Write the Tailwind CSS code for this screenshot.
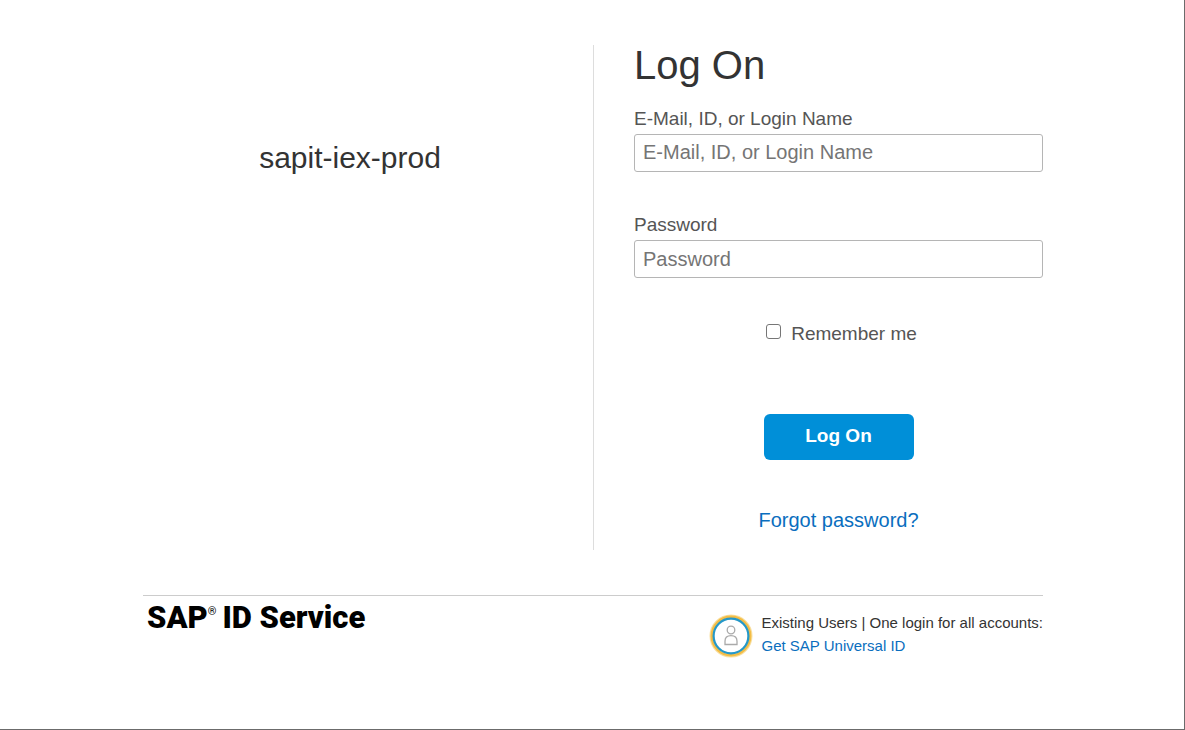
<!DOCTYPE html>
<html lang="en">
<head>
<meta charset="utf-8">
<meta name="viewport" content="width=device-width, initial-scale=1">
<title>Log On</title>
<script src="https://cdn.jsdelivr.net/npm/@tailwindcss/browser@4"></script>
</head>
<body class="relative min-h-screen border-r border-b border-[#6b6b6b] bg-white pl-0.5 font-['Liberation_Sans',Arial,sans-serif] text-[#333]">
  <svg class="absolute top-[126px] -right-px h-[58px] w-px" viewBox="0 0 1 58" fill="#1c1c1c" aria-hidden="true">
    <path d="M0 1h1v1H0zM0 4h1v1H0zM0 9h1v1H0zM0 47h1v1H0zM0 51h1v1H0zM0 55h1v1H0z"/>
  </svg>
  <div class="mx-auto max-w-[900px] pt-[45px]">
    <main class="grid grid-cols-2">
      <section class="flex justify-center pt-[95px] pr-9">
        <h2 class="text-[30px] leading-9">sapit-iex-prod</h2>
      </section>
      <form class="flex flex-col border-l border-[#ddd] pb-3.5 pl-10">
        <h1 class="text-[40px] leading-10">Log On</h1>
        <label for="user" class="mt-6 text-[19px] leading-5 text-[#555]">E-Mail, ID, or Login Name</label>
        <input id="user" type="text" placeholder="E-Mail, ID, or Login Name" class="mt-[5px] h-[38px] w-full rounded-[3px] border border-[#b5b5b5] px-2 pb-0.5 text-xl placeholder:text-[#757575]">
        <label for="pass" class="mt-[43px] text-[19px] leading-5 text-[#555]">Password</label>
        <input id="pass" type="password" placeholder="Password" class="mt-[5px] h-[38px] w-full rounded-[3px] border border-[#b5b5b5] px-2 text-xl placeholder:text-[#757575]">
        <div class="mt-11 flex items-start justify-center gap-2.5 pl-1.5">
          <input id="remember" type="checkbox" class="mt-0.5 size-[15px] appearance-none rounded-[3px] border border-[#767676] bg-white checked:bg-[#008fd3]">
          <label for="remember" class="text-[19px] leading-6 text-[#555]">Remember me</label>
        </div>
        <button type="submit" class="mt-[68px] h-[46px] w-[150px] self-center rounded-md bg-[#008fd8] pb-px text-[19px] font-bold text-white">Log On</button>
        <a href="#" class="mt-11 self-center text-xl leading-8 text-[#0a6ebe]">Forgot password?</a>
      </form>
    </main>
    <footer class="mt-[45px] flex justify-between border-t border-[#ccc]">
      <div class="flex items-start pt-1 pl-1 font-['Roboto',sans-serif] text-[31px] leading-9 font-black text-black">SAP<span class="mt-1.5 text-[11px] leading-3 font-normal">®</span><span class="pl-1.5">ID Service</span></div>
      <div class="flex gap-2 pt-[15px]">
        <svg class="mt-[3px] size-11" viewBox="0 0 44 44" fill="none" aria-hidden="true">
          <circle cx="22" cy="22" r="20.5" stroke="#f8dfa0" stroke-width="2"/>
          <circle cx="22" cy="22" r="19.2" stroke="#f4bd45" stroke-width="2.4"/>
          <circle cx="22" cy="22" r="17.4" fill="#fff" stroke="#2598c8" stroke-width="2.2"/>
          <circle cx="22" cy="16" r="3.8" stroke="#aaa" stroke-width="1.3"/>
          <path d="M16 30.5v-3.3c0-3.6 2.5-5.6 6-5.6s6 2 6 5.6v3.3z" stroke="#aaa" stroke-width="1.3"/>
        </svg>
        <div class="text-[15px] leading-[23px]">
          <p>Existing Users | One login for all accounts:</p>
          <a href="#" class="text-[#0a6ebe]">Get SAP Universal ID</a>
        </div>
      </div>
    </footer>
  </div>
</body>
</html>
